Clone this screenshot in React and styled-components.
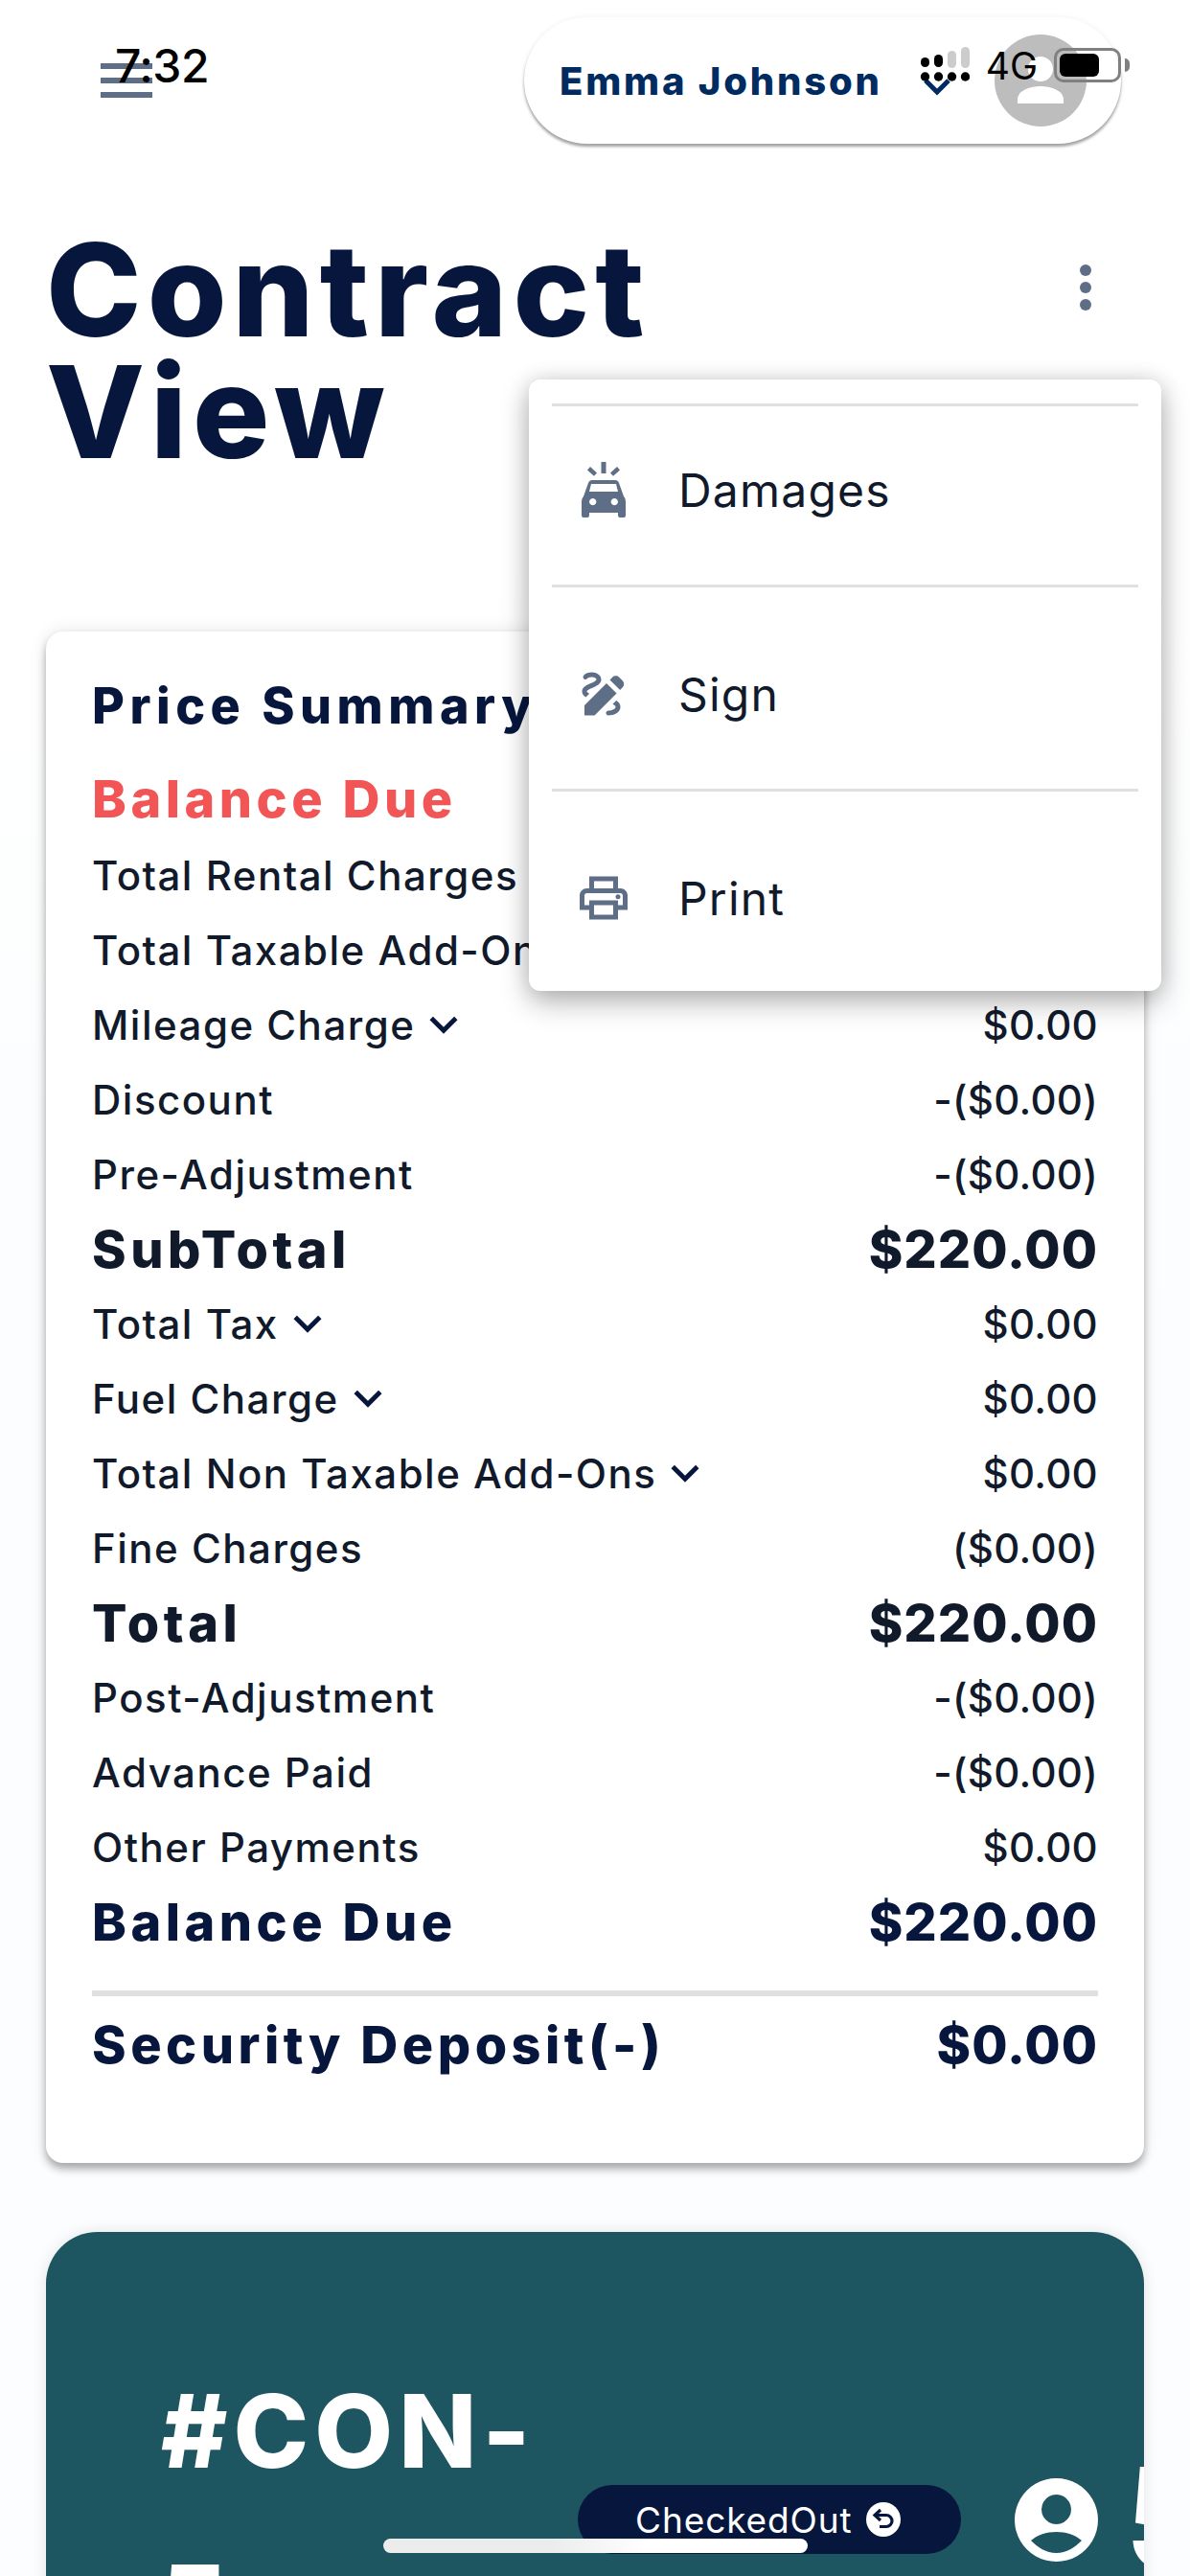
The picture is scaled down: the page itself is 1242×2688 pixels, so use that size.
import React from "react";
import styled, { createGlobalStyle } from "styled-components";
import { MdDraw, MdExpandMore, MdOutlinePrint } from "react-icons/md";

const GlobalStyle = createGlobalStyle`
  body {
    margin: 0;
    background: #fbfdfe;
    font-family: Inter, "Noto Sans", sans-serif;
  }
`;

const Page = styled.div`
  position: relative;
  width: 1242px;
  height: 2688px;
  overflow: hidden;
  background: linear-gradient(#ffffff 0, #ffffff 600px, #fbfdfe 1400px);
`;

/* iOS chrome lies over the app */
const StatusBar = styled.div`
  position: absolute;
  top: 49px;
  left: 0;
  right: 72px;
  height: 38px;
  padding-left: 120px;
  display: flex;
  align-items: center;
  justify-content: space-between;
  z-index: 5;
`;

const Clock = styled.span`
  font-size: 48px;
  font-weight: 500;
  color: #000;
  letter-spacing: -0.5px;
`;

const StatusRight = styled.div`
  display: flex;
  align-items: center;
`;

const Network = styled.span`
  margin: 0 17px 0 17px;
  font-size: 39px;
  font-weight: 400;
  color: #000;
`;

const Battery = styled.div`
  position: relative;
  width: 70px;
  height: 36px;
  box-sizing: border-box;
  padding: 3px;
  border: 3px solid #808080;
  border-radius: 10px;
  &::after {
    content: "";
    position: absolute;
    top: 8px;
    right: -12px;
    width: 5px;
    height: 14px;
    border-radius: 0 6px 6px 0;
    background: #808080;
  }
`;

const BatteryLevel = styled.div`
  width: 41px;
  height: 24px;
  border-radius: 6px;
  background: #000;
`;

const HomeIndicator = styled.div`
  position: absolute;
  left: 400px;
  top: 2649px;
  width: 443px;
  height: 15px;
  border-radius: 8px;
  background: linear-gradient(90deg, #ececec 0, #ececec 40%, #ffffff 62%);
  z-index: 5;
`;

const Header = styled.header`
  display: flex;
  align-items: center;
  justify-content: space-between;
  padding: 18px 72px 0 105px;
`;

const Burger = styled.div`
  display: flex;
  flex-direction: column;
  gap: 9px;
  width: 54px;
`;

const BurgerBar = styled.span`
  height: 6px;
  background: #5f6e87;
`;

const UserPill = styled.div`
  display: flex;
  align-items: center;
  width: 623px;
  height: 132px;
  box-sizing: border-box;
  padding: 0 36px 0 37px;
  border-radius: 66px;
  background: #fff;
  box-shadow: 0 3px 3px rgba(0, 0, 0, 0.35), 0 0 6px rgba(0, 0, 0, 0.06);
`;

const UserName = styled.span`
  font-size: 40px;
  font-weight: 800;
  color: #002b60;
  letter-spacing: 2.8px;
  white-space: nowrap;
`;

const UserChevron = styled.svg`
  margin: 12px 0 0 43px;
  flex-shrink: 0;
`;

const UserAvatar = styled.svg`
  margin-left: auto;
  flex-shrink: 0;
`;

const TitleRow = styled.div`
  display: flex;
  justify-content: space-between;
  margin-top: 89px;
  padding: 0 103px 0 48px;
`;

const Title = styled.h1`
  margin: 0;
  font-size: 134px;
  line-height: 127px;
  font-weight: 800;
  color: #07163d;
  letter-spacing: 6px;
`;

const Kebab = styled.div`
  display: flex;
  flex-direction: column;
  gap: 6px;
  margin-top: 37px;
`;

const KebabDot = styled.span`
  width: 12px;
  height: 12px;
  border-radius: 50%;
  background: #5f6e87;
`;

const Menu = styled.div`
  position: absolute;
  top: 396px;
  left: 552px;
  width: 660px;
  height: 638px;
  box-sizing: border-box;
  padding-top: 25px;
  border-radius: 12px;
  background: #fff;
  box-shadow: 0 12px 30px rgba(0, 0, 0, 0.28), 0 0 22px rgba(0, 0, 0, 0.12);
  z-index: 3;
`;

const MenuItem = styled.div`
  display: flex;
  align-items: center;
  gap: 48px;
  height: 70px;
  margin: 0 24px;
  padding: 76px 24px 64px;
  border-top: 3px solid #e0e0e0;
  &:first-child {
    padding-top: 52px;
  }
`;

const MenuIcon = styled.div`
  display: flex;
  align-items: center;
  justify-content: center;
  width: 60px;
  height: 60px;
  color: #5f6e87;
`;

const MenuLabel = styled.span`
  font-size: 48px;
  font-weight: 400;
  color: #111a2b;
  letter-spacing: 1.2px;
`;

const Summary = styled.section`
  margin: 166px 48px 0;
  padding: 29px 48px 74px;
  border-radius: 18px;
  background: #fff;
  box-shadow: 0 6px 8px rgba(0, 0, 0, 0.3), 0 0 18px rgba(0, 0, 0, 0.1);
`;

const SummaryTitle = styled.div`
  height: 97px;
  display: flex;
  align-items: center;
  font-size: 52px;
  font-weight: 800;
  color: #07163d;
  letter-spacing: 5.5px;
  white-space: nowrap;
`;

const DueHeading = styled.div`
  height: 82px;
  margin-top: 7px;
  display: flex;
  align-items: center;
  font-size: 54px;
  font-weight: 800;
  color: #f25555;
  letter-spacing: 4.5px;
`;

const Row = styled.div`
  display: flex;
  align-items: center;
  justify-content: space-between;
  height: 78px;
  white-space: nowrap;
  color: ${({ $tone }) => ($tone === "navy" ? "#07163d" : "#111a2b")};
  font-size: ${({ $tone }) => ($tone ? "54px" : "42px")};
  font-weight: ${({ $tone }) => ($tone ? 800 : 500)};
  letter-spacing: ${({ $tone }) => ($tone ? "4.5px" : "1.5px")};
`;

const RowLabel = styled.span`
  display: flex;
  align-items: center;
  gap: 1px;
`;

const RowValue = styled.span`
  letter-spacing: ${({ $tone }) => ($tone ? "1px" : "0.3px")};
`;

const RowChevron = styled(MdExpandMore)`
  color: #07163d;
  flex-shrink: 0;
`;

const Divider = styled.hr`
  height: 6px;
  margin: 33px 0 0;
  border: 0;
  background: #e0e0e0;
`;

const DepositRow = styled(Row)`
  height: 100px;
`;

const ContractCard = styled.section`
  display: flex;
  align-items: flex-start;
  height: 500px;
  box-sizing: border-box;
  margin: 72px 48px 0;
  padding: 119px 0 0 120px;
  overflow: hidden;
  border-radius: 54px 54px 0 0;
  background: #1d5560;
  box-shadow: 0 0 16px rgba(0, 0, 0, 0.1);
  color: #fff;
`;

const ContractNo = styled.div`
  flex: 0 0 435px;
  font-size: 106px;
  line-height: 178px;
  font-weight: 800;
  letter-spacing: 6px;
`;

const ContractMeta = styled.div`
  display: flex;
  align-items: center;
  flex-shrink: 0;
  margin-top: 106px;
`;

const StatusPill = styled.div`
  display: flex;
  align-items: center;
  gap: 14px;
  width: 400px;
  height: 72px;
  box-sizing: border-box;
  padding-left: 60px;
  border-radius: 36px;
  background: #07163d;
  font-size: 37px;
  font-weight: 400;
  letter-spacing: 0.9px;
`;

const CustomerIcon = styled.svg`
  margin-left: 56px;
  flex-shrink: 0;
`;

const CustomerInitial = styled.span`
  margin-left: 28px;
  font-size: 150px;
  line-height: 150px;
  font-weight: 800;
`;

const SignalIcon = () => (
  <svg width="52" height="38" viewBox="0 0 52 38">
    <rect x="29" y="4" width="9" height="18" rx="4.5" fill="#ccc" />
    <rect x="43" y="0" width="9" height="22" rx="4.5" fill="#ccc" />
    <rect x="1" y="11" width="9" height="10" rx="4.5" fill="#000" />
    <rect x="15" y="8" width="9" height="13" rx="4.5" fill="#000" />
    <circle cx="5.5" cy="31" r="4.7" fill="#000" />
    <circle cx="19.5" cy="31" r="4.7" fill="#000" />
    <circle cx="33.5" cy="31" r="4.7" fill="#000" />
    <circle cx="47.5" cy="31" r="4.7" fill="#000" />
  </svg>
);

const CarIcon = () => (
  <svg width="46" height="58" viewBox="0 0 46 58" fill="currentColor">
    <rect x="20.5" y="0" width="5" height="12" />
    <path d="M6 8.5 9 5l7 6.5-3 3.2zM40 8.5 37 5l-7 6.5 3 3.2z" />
    <path
      fillRule="evenodd"
      d="M11 19H35Q38 19 39 22L44 36Q46 38 46 41V56Q46 58 44 58H40Q38 58 38 56V53H8V56Q8 58 6 58H2Q0 58 0 56V41Q0 38 2 36L7 22Q8 19 11 19ZM10 23 8 31H38L36 23ZM11.7 38a3.6 3.6 0 1 0 .01 0ZM34.3 38a3.6 3.6 0 1 0 .01 0Z"
    />
  </svg>
);

const ReturnIcon = () => (
  <svg width="36" height="36" viewBox="0 0 36 36">
    <circle cx="18" cy="18" r="18" fill="#fff" />
    <path
      d="M15 8 9 13.5l6 5.5M9.5 13.5H21a6 6 0 0 1 0 12h-7"
      fill="none"
      stroke="#07163d"
      strokeWidth="3.2"
    />
  </svg>
);

const rows = [
  { label: "Total Rental Charges", value: "$220.00" },
  { label: "Total Taxable Add-Ons", value: "$0.00", more: true },
  { label: "Mileage Charge", value: "$0.00", more: true },
  { label: "Discount", value: "-($0.00)" },
  { label: "Pre-Adjustment", value: "-($0.00)" },
  { label: "SubTotal", value: "$220.00", tone: "dark" },
  { label: "Total Tax", value: "$0.00", more: true },
  { label: "Fuel Charge", value: "$0.00", more: true },
  { label: "Total Non Taxable Add-Ons", value: "$0.00", more: true },
  { label: "Fine Charges", value: "($0.00)" },
  { label: "Total", value: "$220.00", tone: "dark" },
  { label: "Post-Adjustment", value: "-($0.00)" },
  { label: "Advance Paid", value: "-($0.00)" },
  { label: "Other Payments", value: "$0.00" },
  { label: "Balance Due", value: "$220.00", tone: "navy" },
];

const App = () => {
  return (
    <Page>
      <GlobalStyle />
      <StatusBar>
        <Clock>7:32</Clock>
        <StatusRight>
          <SignalIcon />
          <Network>4G</Network>
          <Battery>
            <BatteryLevel />
          </Battery>
        </StatusRight>
      </StatusBar>

      <Header>
        <Burger>
          <BurgerBar />
          <BurgerBar />
          <BurgerBar />
        </Burger>
        <UserPill>
          <UserName>Emma Johnson</UserName>
          <UserChevron width="28" height="20" viewBox="0 0 28 20">
            <path d="M2 4 14 16 26 4" fill="none" stroke="#002b60" strokeWidth="5" />
          </UserChevron>
          <UserAvatar width="96" height="96" viewBox="0 0 96 96">
            <circle cx="48" cy="48" r="48" fill="#bdbdbd" />
            <circle cx="48" cy="36" r="13" fill="#fff" />
            <path d="M24 72V68C24 58 38 54 48 54S72 58 72 68V72Z" fill="#fff" />
          </UserAvatar>
        </UserPill>
      </Header>

      <TitleRow>
        <Title>
          Contract
          <br />
          View
        </Title>
        <Kebab>
          <KebabDot />
          <KebabDot />
          <KebabDot />
        </Kebab>
      </TitleRow>

      <Menu>
        <MenuItem>
          <MenuIcon>
            <CarIcon />
          </MenuIcon>
          <MenuLabel>Damages</MenuLabel>
        </MenuItem>
        <MenuItem>
          <MenuIcon>
            <MdDraw size={60} />
          </MenuIcon>
          <MenuLabel>Sign</MenuLabel>
        </MenuItem>
        <MenuItem>
          <MenuIcon>
            <MdOutlinePrint size={60} />
          </MenuIcon>
          <MenuLabel>Print</MenuLabel>
        </MenuItem>
      </Menu>

      <Summary>
        <SummaryTitle>Price Summary</SummaryTitle>
        <DueHeading>Balance Due</DueHeading>
        {rows.map((row) => (
          <Row key={row.label} $tone={row.tone}>
            <RowLabel>
              {row.label}
              {row.more && <RowChevron size={58} />}
            </RowLabel>
            <RowValue $tone={row.tone}>{row.value}</RowValue>
          </Row>
        ))}
        <Divider />
        <DepositRow $tone="navy">
          <span>Security Deposit(-)</span>
          <RowValue $tone="navy">$0.00</RowValue>
        </DepositRow>
      </Summary>

      <ContractCard>
        <ContractNo>
          #CON-
          <br />5
        </ContractNo>
        <ContractMeta>
          <StatusPill>
            CheckedOut
            <ReturnIcon />
          </StatusPill>
          <CustomerIcon width="87" height="87" viewBox="0 0 87 87">
            <path
              fillRule="evenodd"
              fill="#fff"
              d="M43.5 0a43.5 43.5 0 1 1-.01 0ZM43.5 17a15.5 15.5 0 1 0 .01 0ZM17 65C24 59 33 56 43.5 56S63 59 70 65C63 72 54 78 43.5 78S24 72 17 65Z"
            />
          </CustomerIcon>
          <CustomerInitial>5</CustomerInitial>
        </ContractMeta>
      </ContractCard>

      <HomeIndicator />
    </Page>
  );
};

export default App;
